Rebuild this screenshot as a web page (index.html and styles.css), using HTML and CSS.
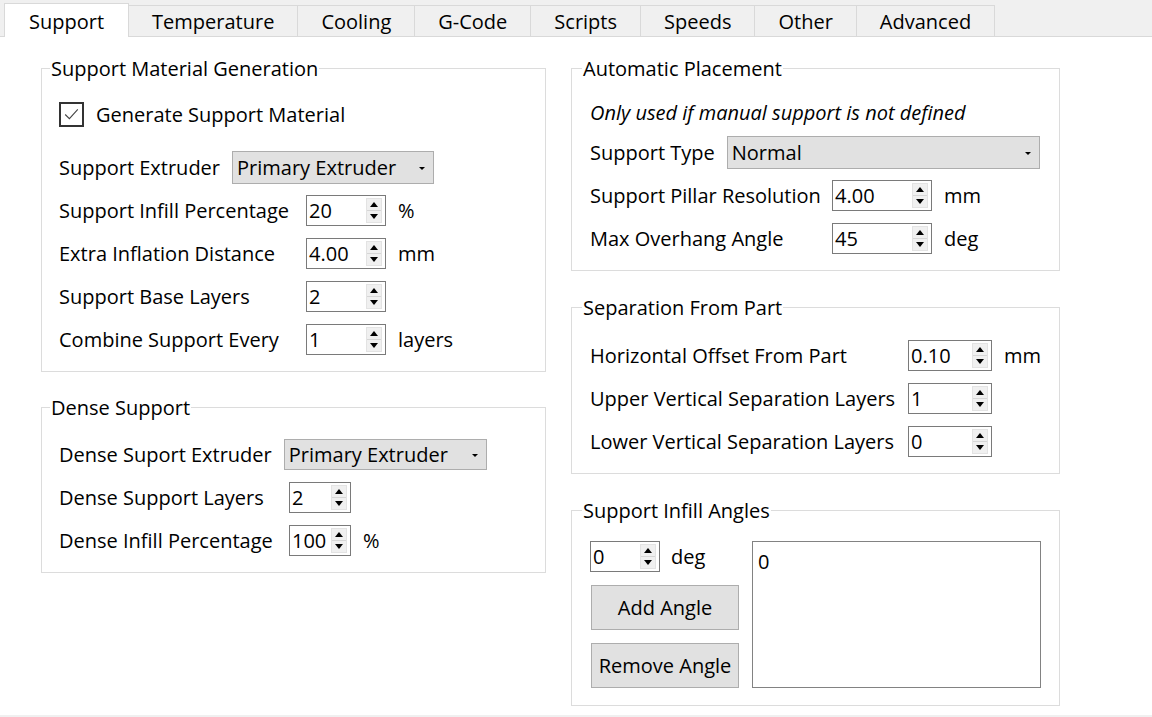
FILE: index.html
```html
<!DOCTYPE html>
<html lang="en">
  <head>
    <meta charset="UTF-8" />
    <title>Support settings</title>
    <link rel="stylesheet" href="styles.css">
  </head>

  <body>
    <!-- pestañas superiores -->
    <nav class="tabbar">
      <a class="tab active">Support</a>
      <a class="tab">Temperature</a>
      <a class="tab">Cooling</a>
      <a class="tab">G-Code</a>
      <a class="tab">Scripts</a>
      <a class="tab">Speeds</a>
      <a class="tab">Other</a>
      <a class="tab">Advanced</a>
    </nav>

    <main class="pane">
      <section class="col col-left">
        <fieldset class="group g-gen">
          <legend>Support Material Generation</legend>
          <label class="check-row">
            <span class="check">
              <svg viewBox="0 0 25 25" width="21" height="21"><path d="M5 12.5 L10 17.5 L20 6.5" fill="none" stroke="#444" stroke-width="1.3"/></svg>
            </span>
            Generate Support Material
          </label>
          <div class="row">
            <span class="lbl-auto">Support Extruder</span>
            <div class="combo w-ext">Primary Extruder<i class="caret"></i></div>
          </div>
          <div class="row">
            <span class="lbl">Support Infill Percentage</span>
            <div class="spin"><span class="val">20</span><span class="arrows"><i class="up"></i><i class="down"></i></span></div>
            <span class="unit">%</span>
          </div>
          <div class="row">
            <span class="lbl">Extra Inflation Distance</span>
            <div class="spin"><span class="val">4.00</span><span class="arrows"><i class="up"></i><i class="down"></i></span></div>
            <span class="unit">mm</span>
          </div>
          <div class="row">
            <span class="lbl">Support Base Layers</span>
            <div class="spin"><span class="val">2</span><span class="arrows"><i class="up"></i><i class="down"></i></span></div>
          </div>
          <div class="row">
            <span class="lbl">Combine Support Every</span>
            <div class="spin"><span class="val">1</span><span class="arrows"><i class="up"></i><i class="down"></i></span></div>
            <span class="unit">layers</span>
          </div>
        </fieldset>

        <fieldset class="group g-dense">
          <legend>Dense Support</legend>
          <div class="row">
            <span class="lbl-auto">Dense Suport Extruder</span>
            <div class="combo w-dense">Primary Extruder<i class="caret"></i></div>
          </div>
          <div class="row">
            <span class="lbl">Dense Support Layers</span>
            <div class="spin"><span class="val">2</span><span class="arrows"><i class="up"></i><i class="down"></i></span></div>
          </div>
          <div class="row">
            <span class="lbl">Dense Infill Percentage</span>
            <div class="spin"><span class="val">100</span><span class="arrows"><i class="up"></i><i class="down"></i></span></div>
            <span class="unit">%</span>
          </div>
        </fieldset>
      </section>

      <section class="col col-right">
        <fieldset class="group g-auto">
          <legend>Automatic Placement</legend>
          <p class="note">Only used if manual support is not defined</p>
          <div class="row">
            <span class="lbl-auto">Support Type</span>
            <div class="combo w-type">Normal<i class="caret"></i></div>
          </div>
          <div class="row">
            <span class="lbl">Support Pillar Resolution</span>
            <div class="spin"><span class="val">4.00</span><span class="arrows"><i class="up"></i><i class="down"></i></span></div>
            <span class="unit">mm</span>
          </div>
          <div class="row">
            <span class="lbl">Max Overhang Angle</span>
            <div class="spin"><span class="val">45</span><span class="arrows"><i class="up"></i><i class="down"></i></span></div>
            <span class="unit">deg</span>
          </div>
        </fieldset>

        <fieldset class="group g-sep">
          <legend>Separation From Part</legend>
          <div class="row">
            <span class="lbl">Horizontal Offset From Part</span>
            <div class="spin"><span class="val">0.10</span><span class="arrows"><i class="up"></i><i class="down"></i></span></div>
            <span class="unit">mm</span>
          </div>
          <div class="row">
            <span class="lbl">Upper Vertical Separation Layers</span>
            <div class="spin"><span class="val">1</span><span class="arrows"><i class="up"></i><i class="down"></i></span></div>
          </div>
          <div class="row">
            <span class="lbl">Lower Vertical Separation Layers</span>
            <div class="spin"><span class="val">0</span><span class="arrows"><i class="up"></i><i class="down"></i></span></div>
          </div>
        </fieldset>

        <fieldset class="group g-angles">
          <legend>Support Infill Angles</legend>
          <div class="angles">
            <div class="angle-tools">
              <div class="angle-input">
                <div class="spin"><span class="val">0</span><span class="arrows"><i class="up"></i><i class="down"></i></span></div>
                <span class="unit">deg</span>
              </div>
              <button class="btn">Add Angle</button>
              <button class="btn">Remove Angle</button>
            </div>
            <div class="listbox">0</div>
          </div>
        </fieldset>
      </section>
    </main>
  </body>
</html>
```

FILE: styles.css
```css
/* reseteo */
html {
  box-sizing: border-box;
  font-family: "Open Sans", "Noto Sans", sans-serif;
  font-size: 20px;
}

*,
*:before,
*:after {
  box-sizing: inherit;
}

body {
  margin: 0;
  height: 717px;
  background-color: #f0f0f0;
  color: #000;
  line-height: 27px;
  overflow: hidden;
}

/* barra de pestañas */
.tabbar {
  display: flex;
  align-items: flex-end;
  height: 37px;
  padding-left: 4px;
  border-bottom: 1px solid #d9d9d9;
}

.tab {
  height: 31px;
  padding: 0 23px;
  border: 1px solid #d9d9d9;
  border-bottom: none;
  margin-left: -1px;
  background-color: #f0f0f0;
  line-height: 32px;
  white-space: nowrap;
}

.tab.active {
  height: 34px;
  margin-left: 0;
  margin-bottom: -1px;
  padding: 0 24px;
  background-color: #fff;
  line-height: 35px;
  position: relative;
  z-index: 1;
}

/* contenido de la pestaña */
.pane {
  display: flex;
  gap: 25px;
  height: 678px;
  padding: 18px 0 0 41px;
  background-color: #fff;
}

.col {
  display: flex;
  flex-direction: column;
  gap: 22px;
}

.col-left {
  width: 505px;
}

.col-right {
  width: 489px;
  gap: 23px;
}

.group {
  margin: 0;
  padding: 11px 10px 10px 17px;
  border: 1px solid #dcdcdc;
  min-width: 0;
}

.group legend {
  margin-left: -9px;
  padding: 0 1px;
  line-height: 27px;
}

/* los grupos de la derecha tienen 1px mas de margen */
.col-right .group {
  padding-left: 18px;
}

.col-right .group legend {
  margin-left: -8px;
}

.row {
  display: flex;
  align-items: center;
  height: 43px;
}

.lbl {
  flex: none;
  white-space: nowrap;
}

.lbl-auto {
  margin-right: 12px;
  white-space: nowrap;
}

.unit {
  margin-left: 12px;
}

/* anchos de columna por grupo */
.g-gen .lbl { width: 247px; }
.g-gen .spin { width: 80px; }

.g-dense { padding-top: 12px; }
.g-dense .lbl { width: 230px; }
.g-dense .spin { width: 62px; }

.g-auto { padding-top: 12px; }
.g-auto .lbl { width: 242px; }
.g-auto .spin { width: 100px; }

.g-sep { padding-top: 13px; }
.g-sep .lbl { width: 318px; }
.g-sep .spin { width: 84px; }

.g-angles {
  padding-top: 17px;
  padding-bottom: 17px;
}

/* checkbox */
.check-row {
  display: flex;
  align-items: center;
  gap: 12px;
  height: 43px;
  margin-bottom: 10px;
}

.check {
  display: flex;
  align-items: center;
  justify-content: center;
  width: 25px;
  height: 25px;
  border: 2px solid #333;
  background-color: #fff;
}

.note {
  margin: 0;
  height: 37px;
  line-height: 37px;
  font-style: italic;
}

/* combo */
.combo {
  position: relative;
  height: 33px;
  padding-left: 4px;
  border: 1px solid #adadad;
  background-color: #e1e1e1;
  line-height: 31px;
  white-space: nowrap;
}

.w-ext { width: 202px; }
.w-type { width: 313px; }
.w-dense { width: 203px; height: 31px; line-height: 29px; }

.caret {
  position: absolute;
  right: 8px;
  top: 50%;
  margin-top: -1px;
  border-left: 3px solid transparent;
  border-right: 3px solid transparent;
  border-top: 3px solid #000;
}

/* spin box */
.spin {
  display: flex;
  align-items: stretch;
  height: 31px;
  border: 1px solid #7a7a7a;
  background-color: #fff;
}

.spin .val {
  flex: 1;
  padding-left: 2px;
  line-height: 29px;
}

.spin .arrows {
  display: flex;
  flex-direction: column;
  width: 16px;
  margin: 2px 3px 2px 0;
  background-color: #f0f0f0;
  border: 1px solid #e3e3e3;
}

.spin .arrows i {
  flex: 1;
  display: flex;
  align-items: center;
  justify-content: center;
}

.spin .up:before {
  content: "";
  border-left: 4px solid transparent;
  border-right: 4px solid transparent;
  border-bottom: 5px solid #000;
}

.spin .down {
  border-top: 1px solid #d6d6d6;
}

.spin .down:before {
  content: "";
  border-left: 4px solid transparent;
  border-right: 4px solid transparent;
  border-top: 5px solid #000;
}

/* angulos */
.angles {
  display: flex;
  gap: 13px;
}

.angle-tools {
  display: flex;
  flex-direction: column;
  width: 149px;
}

.angle-input {
  display: flex;
  align-items: center;
  height: 31px;
  margin-bottom: 13px;
}

.angle-input .spin {
  width: 70px;
}

.angle-input .unit {
  margin-left: 11px;
}

.btn {
  height: 45px;
  margin: 0 0 0 1px;
  border: 1px solid #adadad;
  background-color: #e1e1e1;
  font: inherit;
  color: #000;
  padding: 0;
}

.btn + .btn {
  margin-top: 13px;
}

.listbox {
  width: 289px;
  height: 147px;
  padding: 6px 5px;
  border: 1px solid #828282;
  background-color: #fff;
}
```
